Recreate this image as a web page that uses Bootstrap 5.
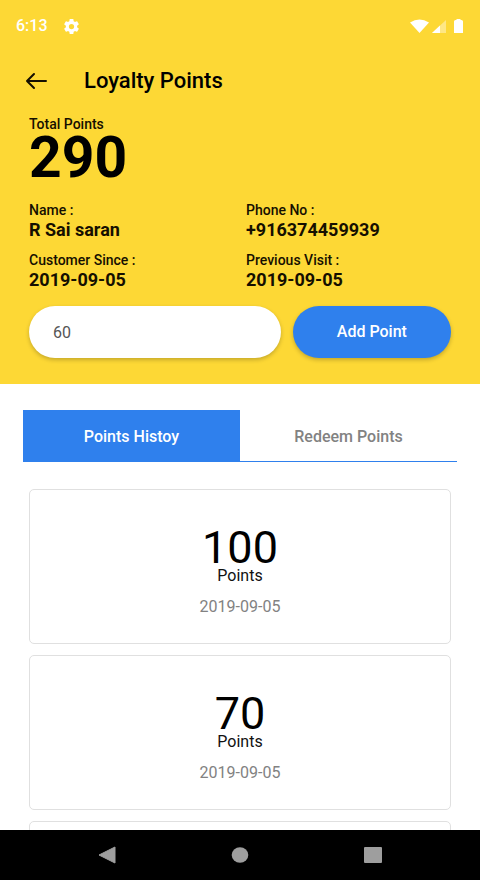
<!DOCTYPE html>
<html lang="en">
<head>
<meta charset="utf-8">
<meta name="viewport" content="width=device-width, initial-scale=1">
<title>Loyalty Points</title>
<link href="https://cdn.jsdelivr.net/npm/bootstrap@5.3.0/dist/css/bootstrap.min.css" rel="stylesheet">
<style>
  body { font-family: Roboto, "Liberation Sans", sans-serif; color: #000; background: #fff; }
  .hero { background: #fdd835; padding-bottom: 26px; }
  .status-bar { height: 52px; padding: 0 16px; color: #fff; font-size: 16px; line-height: 20px; font-weight: 500; }
  .app-bar { height: 58px; padding: 0 24px; gap: 36px; margin-bottom: 6px; }
  .app-bar h1 { font-size: 22px; line-height: 28px; font-weight: 500; }
  .side-pad { padding-left: 29px; padding-right: 29px; }
  .label-text { font-size: 14px; line-height: 16px; font-weight: 500; color: #150f00; }
  .value-text { font-size: 18px; line-height: 24px; font-weight: 700; color: #150f00; }
  .total { font-size: 57px; line-height: 52px; font-weight: 700; }
  .details { row-gap: 10px; margin-top: 18px; }
  .second-col { padding-left: 6px; }
  .entry { gap: 12px; margin-top: 14px; }
  .pill { height: 52px; box-shadow: 0 2px 4px rgba(0,0,0,.22); font-size: 16px; }
  .pill-input, .pill-input:focus { flex: 1 1 0; padding: 0 24px; color: #555; background: #fff; }
  .pill-btn { width: 37.5%; font-weight: 500; }
  .brand, .brand:hover { background: #2f80ed; color: #fff; }
  .history-tabs { margin: 26px 23px 27px; border-bottom: 1px solid #2f80ed; }
  .history-tabs .nav-link { height: 51px; padding: 10px 8px 8px; border-radius: 0; font-size: 16px; font-weight: 500; color: #828282; }
  .history-tabs .nav-link.active { background: #2f80ed; color: #fff; }
  .history { gap: 11px; }
  .point-card { border: 1px solid #e0e0e0; border-radius: 5px; padding: 38px 16px 26px; }
  .amount { font-size: 45px; line-height: 40px; }
  .unit { font-size: 16px; line-height: 16px; color: #111; }
  .date { font-size: 16px; line-height: 20px; margin-top: 13px; color: #828282; }
  .system-nav { height: 50px; background: #000; padding: 0 40px; }
</style>
<script src="https://cdn.jsdelivr.net/npm/bootstrap@5.3.0/dist/js/bootstrap.bundle.min.js" defer></script>
</head>
<body class="vh-100 d-flex flex-column overflow-hidden">
<header class="hero flex-shrink-0">
  <div class="status-bar d-flex align-items-center">
    <span>6:13</span>
    <svg class="ms-3 me-auto" width="15" height="15" viewBox="2 2 20 20" fill="#fff" aria-hidden="true"><path d="M19.43 12.98c.04-.32.07-.64.07-.98s-.03-.66-.07-.98l2.11-1.65c.19-.15.24-.42.12-.64l-2-3.46c-.12-.22-.39-.3-.61-.22l-2.49 1c-.52-.4-1.08-.73-1.69-.98l-.38-2.65C14.46 2.18 14.25 2 14 2h-4c-.25 0-.46.18-.49.42l-.38 2.65c-.61.25-1.17.59-1.69.98l-2.49-1c-.23-.09-.49 0-.61.22l-2 3.46c-.13.22-.07.49.12.64l2.11 1.65c-.04.32-.07.65-.07.98s.03.66.07.98l-2.11 1.65c-.19.15-.24.42-.12.64l2 3.46c.12.22.39.3.61.22l2.49-1c.52.4 1.08.73 1.69.98l.38 2.65c.03.24.24.42.49.42h4c.25 0 .46-.18.49-.42l.38-2.65c.61-.25 1.17-.59 1.69-.98l2.49 1c.23.09.49 0 .61-.22l2-3.46c.12-.22.07-.49-.12-.64zM12 15.5a3.500 3.500 0 1 1 0-7 3.500 3.500 0 0 1 0 7z"/></svg>
    <svg width="54" height="16" viewBox="0 0 54 16" fill="#fff" aria-hidden="true"><path d="M0 4.500Q9.500-1.500 19 4.500L9.500 15z"/><path d="M22 15 36 2v13z" opacity=".4"/><path d="M22 15l8-7.500V15z"/><path d="M44 3.500Q44 2 45.500 2h1V1h4v1h1Q53 2 53 3.500V15h-9z"/></svg>
  </div>
  <div class="app-bar d-flex align-items-center">
    <button type="button" class="btn p-0 border-0 d-flex" aria-label="Back"><svg width="24" height="20" viewBox="0 0 24 20" fill="none" stroke="#150f00" stroke-width="2" stroke-linecap="round" stroke-linejoin="round"><path d="M22 10H3M10 3l-7 7 7 7"/></svg></button>
    <h1 class="m-0">Loyalty Points</h1>
  </div>
  <div class="side-pad">
    <div class="label-text">Total Points</div>
    <div class="total">290</div>
    <div class="row gx-0 details">
      <div class="col-6"><div class="label-text">Name :</div><div class="value-text">R Sai saran</div></div>
      <div class="col-6 second-col"><div class="label-text">Phone No :</div><div class="value-text">+916374459939</div></div>
      <div class="col-6"><div class="label-text">Customer Since :</div><div class="value-text">2019-09-05</div></div>
      <div class="col-6 second-col"><div class="label-text">Previous Visit :</div><div class="value-text">2019-09-05</div></div>
    </div>
    <form class="entry d-flex">
      <input type="text" inputmode="numeric" class="form-control rounded-pill border-0 pill pill-input" value="60" aria-label="Points to add">
      <button type="button" class="btn rounded-pill border-0 pill pill-btn brand">Add Point</button>
    </form>
  </div>
</header>
<main class="flex-fill overflow-hidden">
  <div class="nav nav-pills nav-fill history-tabs" role="tablist">
    <button type="button" class="nav-link active w-50" role="tab" aria-selected="true">Points Histoy</button>
    <button type="button" class="nav-link w-50" role="tab" aria-selected="false">Redeem Points</button>
  </div>
  <div class="side-pad history d-flex flex-column text-center">
    <article class="card point-card"><div class="amount">100</div><div class="unit">Points</div><div class="date">2019-09-05</div></article>
    <article class="card point-card"><div class="amount">70</div><div class="unit">Points</div><div class="date">2019-09-05</div></article>
    <article class="card point-card"></article>
  </div>
</main>
<nav class="system-nav d-flex align-items-center flex-shrink-0" aria-label="System">
  <button type="button" class="btn p-0 border-0 d-flex flex-fill justify-content-center" aria-label="Back"><svg width="18" height="18" viewBox="0 0 18 18"><path d="M1 9 17 1v16z" fill="#9e9e9e" stroke="#9e9e9e" stroke-linejoin="round"/></svg></button>
  <button type="button" class="btn p-0 border-0 d-flex flex-fill justify-content-center" aria-label="Home"><svg width="18" height="18" viewBox="0 0 18 18"><ellipse cx="9" cy="9" rx="8.300" ry="7.800" fill="#9e9e9e"/></svg></button>
  <button type="button" class="btn p-0 border-0 d-flex flex-fill justify-content-center" aria-label="Recents"><svg width="18" height="18" viewBox="0 0 18 18"><rect y="1" width="18" height="16" rx="1" fill="#9e9e9e"/></svg></button>
</nav>
</body>
</html>
